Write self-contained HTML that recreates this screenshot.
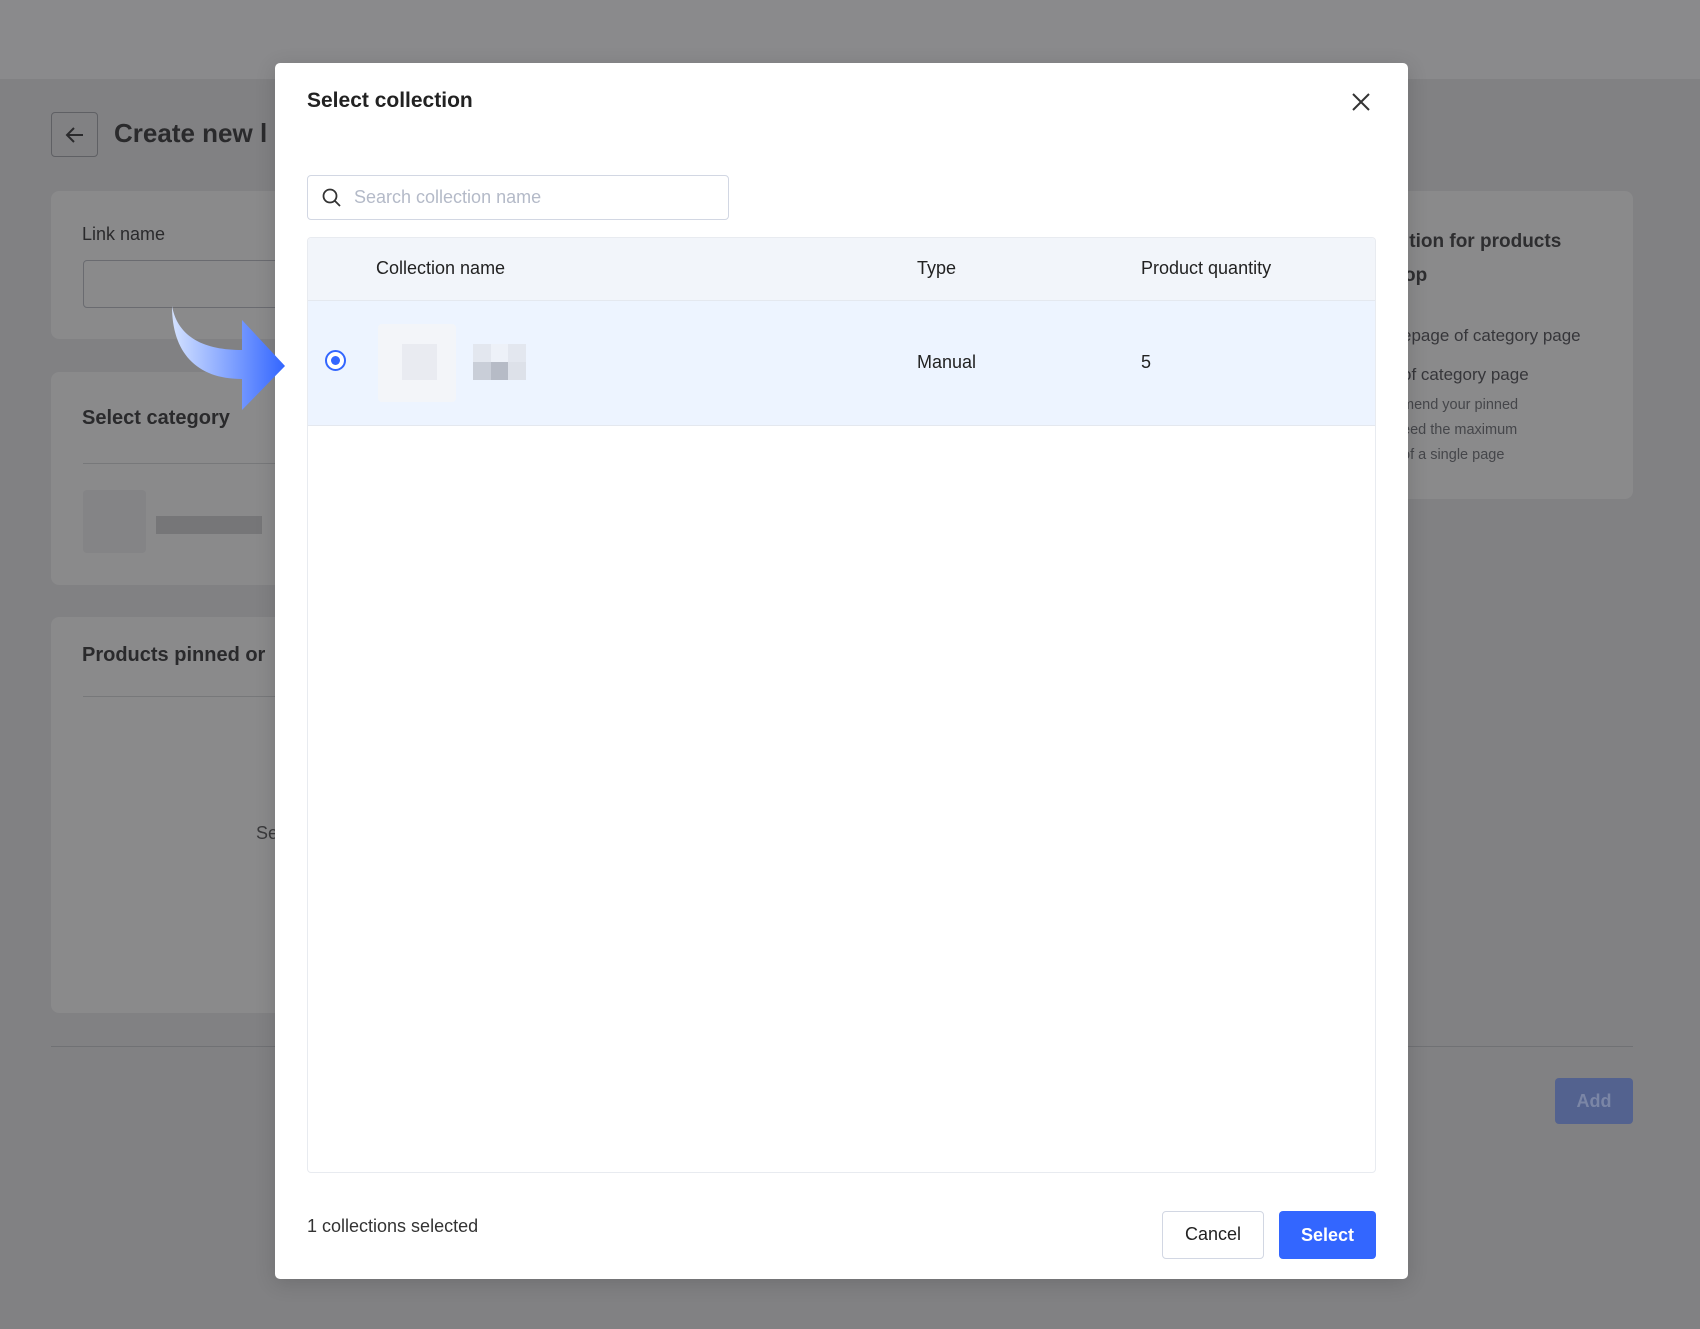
<!DOCTYPE html>
<html><head><meta charset="utf-8"><style>
*{box-sizing:border-box;margin:0;padding:0}
body{width:1700px;height:1329px;background:#818183;font-family:"Liberation Sans",sans-serif;position:relative;overflow:hidden;color:#222}
.a{position:absolute}
.card{position:absolute;background:#8a8a8b;border-radius:8px}
.bt{color:#2a2a2c;font-weight:bold}
.m{position:absolute;left:275px;top:63px;width:1133px;height:1216px;background:#fff;border-radius:5px;box-shadow:0 4px 20px rgba(0,0,0,.15)}
</style></head><body>
<div class="a" style="left:0;top:0;width:1700px;height:79px;background:#8a8a8c"></div>
<div class="a" style="left:51px;top:112px;width:47px;height:45px;border:1.5px solid #5f6064;border-radius:4px"></div>
<svg class="a" style="left:62px;top:122px" width="26" height="26" viewBox="0 0 26 26"><path d="M21 13H5M12 6l-7 7 7 7" stroke="#2a2a2c" stroke-width="2" fill="none"/></svg>
<div class="a bt" style="left:114px;top:118px;font-size:26px;">Create new l</div>
<div class="card" style="left:51px;top:191px;width:300px;height:148px"></div>
<div class="a" style="left:82px;top:224px;font-size:18px;color:#2a2a2c">Link name</div>
<div class="a" style="left:83px;top:260px;width:240px;height:48px;border:1.5px solid #6a6b70;border-radius:4px"></div>
<div class="card" style="left:51px;top:372px;width:300px;height:213px"></div>
<div class="a bt" style="left:82px;top:407px;font-size:20px">Select category</div>
<div class="a" style="left:83px;top:463px;width:220px;height:1px;background:#77787a"></div>
<div class="a" style="left:83px;top:490px;width:63px;height:63px;background:#848486;border-radius:4px"></div>
<div class="a" style="left:156px;top:516px;width:106px;height:18px;background:#767678"></div>
<div class="card" style="left:51px;top:617px;width:300px;height:396px"></div>
<div class="a bt" style="left:82px;top:644px;font-size:20px">Products pinned or</div>
<div class="a" style="left:83px;top:696px;width:220px;height:1px;background:#77787a"></div>
<div class="a" style="left:256px;top:823px;font-size:18px;color:#3a3a3c">Se</div>
<div class="card" style="left:1380px;top:191px;width:253px;height:308px"></div>
<div class="a bt" style="left:1404px;top:225px;font-size:19px;line-height:34px;color:#2e2e30">ition for products<br>op</div>
<div class="a" style="left:1402px;top:316px;font-size:17px;color:#36363a;line-height:39px">epage of category page<br>of category page</div>
<div class="a" style="left:1402px;top:393px;font-size:14.5px;color:#45464a;line-height:25px">mend your pinned<br>eed the maximum<br>of a single page</div>
<div class="a" style="left:51px;top:1046px;width:1582px;height:1px;background:#707174"></div>
<div class="a" style="left:1555px;top:1078px;width:78px;height:46px;background:#53628f;border-radius:4px;color:#7b86a6;font-size:18px;font-weight:bold;text-align:center;line-height:46px">Add</div>

<div class="m"></div>
<div class="a" style="left:307px;top:89px;font-size:21px;font-weight:600;color:#222">Select collection</div>
<svg class="a" style="left:1351px;top:92px" width="20" height="20" viewBox="0 0 20 20"><path d="M2 2L18 18M18 2L2 18" stroke="#333" stroke-width="2"/></svg>
<div class="a" style="left:307px;top:175px;width:422px;height:45px;border:1.5px solid #d2d7e3;border-radius:4px"></div>
<svg class="a" style="left:321px;top:187px" width="22" height="22" viewBox="0 0 22 22"><circle cx="9" cy="9" r="6.5" stroke="#333" stroke-width="1.8" fill="none"/><path d="M14 14l5 5" stroke="#333" stroke-width="1.8"/></svg>
<div class="a" style="left:354px;top:187px;font-size:18px;color:#b4bac8">Search collection name</div>
<div class="a" style="left:307px;top:237px;width:1069px;height:936px;border:1px solid #e8ebf0;border-radius:4px;overflow:hidden">
 <div style="height:63px;background:#f2f5fa;border-bottom:1px solid #e4e8ef"></div>
 <div style="height:125px;background:#edf4ff;border-bottom:1px solid #e4e8ef"></div>
</div>
<div class="a" style="left:376px;top:258px;font-size:18px;color:#222">Collection name</div>
<div class="a" style="left:917px;top:258px;font-size:18px;color:#222">Type</div>
<div class="a" style="left:1141px;top:258px;font-size:18px;color:#222">Product quantity</div>
<div class="a" style="left:325px;top:350px;width:21px;height:21px;border:2px solid #3366ff;border-radius:50%;background:#fff"></div>
<div class="a" style="left:331px;top:356px;width:9px;height:9px;border-radius:50%;background:#3366ff"></div>
<div class="a" style="left:378px;top:324px;width:78px;height:78px;background:#f3f5f9;border-radius:4px"></div>
<div class="a" style="left:402px;top:344px;width:35px;height:36px;background:#e9ebf1"></div>
<div class="a" style="left:473px;top:344px;width:18px;height:18px;background:#e3e7ef"></div>
<div class="a" style="left:491px;top:344px;width:17px;height:18px;background:#edf1f8"></div>
<div class="a" style="left:508px;top:344px;width:18px;height:18px;background:#e3e7ef"></div>
<div class="a" style="left:473px;top:362px;width:18px;height:18px;background:#c9ced8"></div>
<div class="a" style="left:491px;top:362px;width:17px;height:18px;background:#b6bbc6"></div>
<div class="a" style="left:508px;top:362px;width:18px;height:18px;background:#dde1e9"></div>
<div class="a" style="left:917px;top:352px;font-size:18px;color:#222">Manual</div>
<div class="a" style="left:1141px;top:352px;font-size:18px;color:#222">5</div>
<div class="a" style="left:307px;top:1216px;font-size:18px;color:#333">1 collections selected</div>
<div class="a" style="left:1162px;top:1211px;width:102px;height:48px;border:1.5px solid #d2d7e3;border-radius:4px;font-size:18px;text-align:center;line-height:45px;color:#222">Cancel</div>
<div class="a" style="left:1279px;top:1211px;width:97px;height:48px;background:#3366ff;border-radius:4px;font-size:18px;text-align:center;line-height:48px;color:#fff;font-weight:bold">Select</div>

<svg class="a" style="left:0;top:0" width="400" height="450" viewBox="0 0 400 450">
<defs><linearGradient id="g" x1="0" x2="1" y1="0" y2="0"><stop offset="0" stop-color="#d4e2ff"/><stop offset="1" stop-color="#3366ff"/></linearGradient></defs>
<path d="M172,306 C172,352 196,379 242,379 L242,410 L285,366 L242,320 L242,350 C205,350 178,338 172,306 Z" fill="url(#g)"/>
</svg>
</body></html>
